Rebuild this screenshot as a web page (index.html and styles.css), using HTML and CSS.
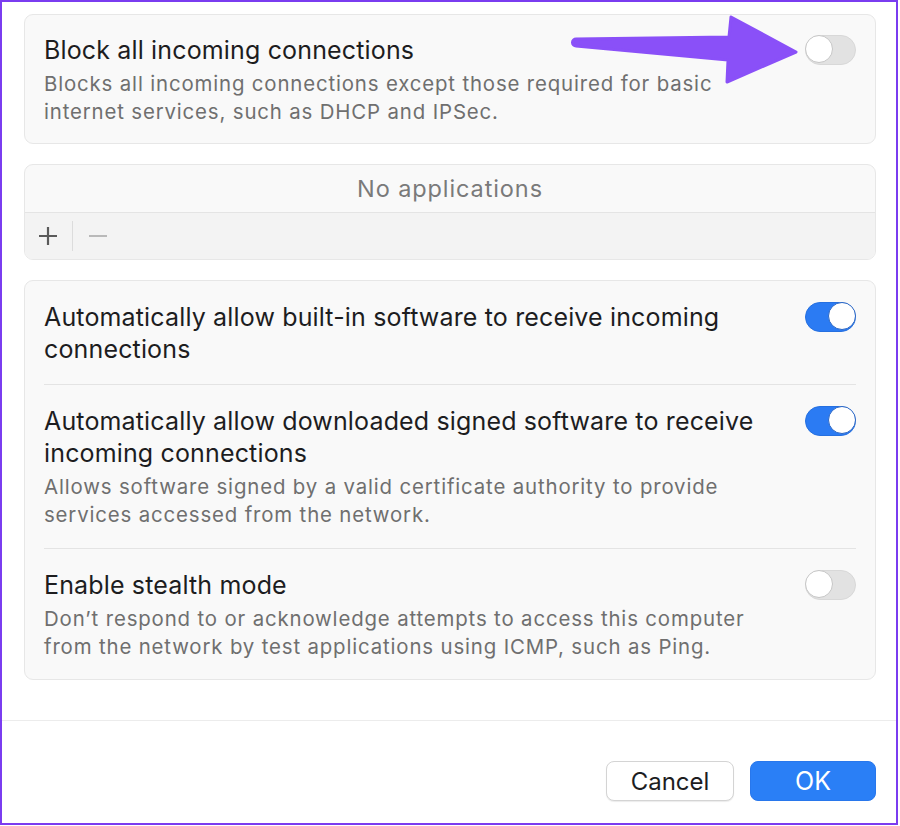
FILE: index.html
```html
<!DOCTYPE html>
<html>
<head>
<meta charset="utf-8">
<link rel="stylesheet" href="styles.css">
</head>
<body>
<div class="frame">
  <div class="content">
    <section class="card">
      <div class="row">
        <div class="text">
          <div class="title">Block all incoming connections</div>
          <div class="desc">Blocks all incoming connections except those required for basic internet services, such as DHCP and IPSec.</div>
        </div>
        <span class="toggle"><span class="knob"></span></span>
      </div>
    </section>

    <section class="card apps">
      <div class="apps-list">No applications</div>
      <div class="apps-bar">
        <span class="ctl plus">
          <svg width="20" height="20" viewBox="0 0 20 20"><path d="M10 1v18M1 10h18" stroke="#5a5a5a" stroke-width="2.2" fill="none"/></svg>
        </span>
        <span class="bar-sep"></span>
        <span class="ctl minus">
          <svg width="20" height="20" viewBox="0 0 20 20"><path d="M1 10h18" stroke="#b9b9b9" stroke-width="2.2" fill="none"/></svg>
        </span>
      </div>
    </section>

    <section class="card list">
      <div class="row">
        <div class="text">
          <div class="title">Automatically allow built-in software to receive incoming connections</div>
        </div>
        <span class="toggle on"><span class="knob"></span></span>
      </div>
      <div class="row">
        <div class="text">
          <div class="title">Automatically allow downloaded signed software to receive incoming connections</div>
          <div class="desc">Allows software signed by a valid certificate authority to provide services accessed from the network.</div>
        </div>
        <span class="toggle on"><span class="knob"></span></span>
      </div>
      <div class="row">
        <div class="text">
          <div class="title">Enable stealth mode</div>
          <div class="desc">Don’t respond to or acknowledge attempts to access this computer from the network by test applications using ICMP, such as Ping.</div>
        </div>
        <span class="toggle"><span class="knob"></span></span>
      </div>
    </section>
  </div>

  <footer class="footer">
    <button class="btn cancel">Cancel</button>
    <button class="btn ok">OK</button>
  </footer>

  <svg class="arrow" width="250" height="85" viewBox="0 0 250 85">
    <path d="M16 31 L169 29 L171 9 L236 44 L167 74 L168 52 L16 38 A3.5 3.5 0 0 1 16 31 Z" fill="#8a50f8" stroke="#8a50f8" stroke-width="3" stroke-linejoin="round"/>
  </svg>
</div>
</body>
</html>
```

FILE: styles.css
```css
html, body {
  margin: 0;
  padding: 0;
  background: #ffffff;
}

body {
  font-family: Inter, "Noto Sans", sans-serif;
  color: #1d1d1f;
}

.frame {
  position: relative;
  box-sizing: border-box;
  width: 898px;
  height: 825px;
  border: 2px solid #7a3cf0;
  display: flex;
  flex-direction: column;
}

.content {
  padding: 12px 20px 0 22px;
  display: flex;
  flex-direction: column;
  gap: 20px;
  height: 719px;
  flex: none;
  box-sizing: border-box;
  border-bottom: 1px solid #ececec;
}

.card {
  background: #f9f9f9;
  border: 1px solid #e7e7e7;
  border-radius: 9px;
}

.row {
  display: flex;
  align-items: flex-start;
  padding: 19px 19px 17px 19px;
}

.list .row {
  padding: 20px 0 19px 0;
  margin: 0 19px;
}

.list .row:last-child {
  padding-bottom: 18px;
}

.list .row + .row {
  border-top: 1px solid #e4e4e4;
}

.text {
  flex: 1;
  min-width: 0;
  padding-right: 30px;
}

.title {
  font-size: 25px;
  line-height: 32px;
  color: #1d1d1f;
  letter-spacing: 0.15px;
}

.desc {
  margin-top: 4px;
  font-size: 20.4px;
  line-height: 28px;
  color: #6f6f6f;
  letter-spacing: 0.85px;
}

.toggle {
  flex: none;
  position: relative;
  box-sizing: border-box;
  width: 51px;
  height: 30px;
  margin-top: 1px;
  border-radius: 15px;
  background: #e2e2e2;
  border: 1px solid #d8d8d8;
}

.toggle .knob {
  position: absolute;
  top: -1px;
  left: -1px;
  width: 28px;
  height: 28px;
  box-sizing: border-box;
  border-radius: 50%;
  background: #ffffff;
  border: 1px solid #c6c6c6;
}

.toggle.on {
  background: #2b7bf3;
  border-color: #2670e0;
}

.toggle.on .knob {
  left: auto;
  right: -1px;
  border-color: #2a66c4;
}

.apps {
  display: flex;
  flex-direction: column;
  overflow: hidden;
}

.apps-list {
  height: 47px;
  display: flex;
  align-items: center;
  justify-content: center;
  font-size: 23.5px;
  letter-spacing: 0.9px;
  color: #7a7a7a;
  border-bottom: 1px solid #e4e4e4;
}

.apps-bar {
  height: 46px;
  background: #f3f3f3;
  display: flex;
  align-items: center;
  padding-left: 13px;
}

.ctl {
  display: flex;
  width: 20px;
  height: 20px;
}

.bar-sep {
  width: 1px;
  height: 30px;
  background: #dcdcdc;
  margin: 0 15px 0 14px;
}

.footer {
  flex: 1;
  display: flex;
  justify-content: flex-end;
  align-items: flex-start;
  gap: 16px;
  padding: 40px 20px 0 0;
}

.btn {
  font-family: Inter, "Noto Sans", sans-serif;
  font-size: 24px;
  height: 40px;
  border-radius: 8px;
  padding: 0;
  cursor: pointer;
}

.cancel {
  width: 128px;
  background: #ffffff;
  color: #1d1d1f;
  border: 1px solid #d4d4d4;
  box-shadow: 0 1px 1px rgba(0, 0, 0, 0.08);
}

.ok {
  width: 126px;
  background: #2a7ff6;
  color: #ffffff;
  border: 1px solid #2877ec;
  font-size: 25px;
}

.arrow {
  position: absolute;
  left: 558px;
  top: 6px;
}
```
